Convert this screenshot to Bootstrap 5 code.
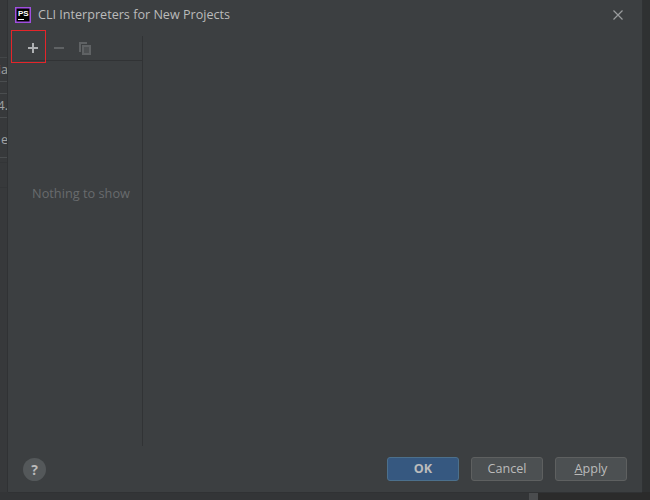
<!DOCTYPE html>
<html lang="en">
<head>
    <meta charset="UTF-8">
    <title>CLI Interpreters for New Projects</title>
    <link href="https://cdn.jsdelivr.net/npm/bootstrap@5.3.0/dist/css/bootstrap.min.css" rel="stylesheet">
    <style>
        html, body { height: 500px; overflow: hidden; }
        body { background: #2b2b2b; font-family: "Open Sans", "Liberation Sans", sans-serif; font-size: 12.6px; color: #bbb; }
        .top-area { height: 492px; }
        .behind { width: 8px; flex: none; color: #a0a2a4; overflow: hidden; background: #37393b; font-size: 12.6px; }
        .behind-row { border-bottom: 1px solid #4a4d4f; white-space: nowrap; justify-content: flex-end; }
        .row-h58 { height: 58px; border-bottom-color: #434648; }
        .row-ia { height: 24px; line-height: 23px; }
        .row-h12 { height: 12px; }
        .row-four { height: 24px; line-height: 23px; }
        .row-e { height: 40px; line-height: 44px; }
        .row-h5 { height: 5px; border-bottom-color: #333537; }
        .row-h25 { height: 25px; border-bottom-color: #333537; }
        .ide-dialog { width: 634px; flex: none; background: #3c3f41; box-shadow: -1px 0 0 #303234, 0 1px 0 #303234, 1px 0 0 #303234; position: relative; }
        .right-strip { width: 8px; flex: none; background: #2f3132; }
        .title-row { height: 36px; padding: 0 19px 6px 7px; flex: none; }
        .title-text { color: #bbb; margin-left: 7px; }
        .body-row { height: 410px; flex: none; }
        .side-pane { width: 123px; margin-left: 12px; flex: none; border-right: 1px solid #313335; position: relative; }
        .tool-row { height: 25px; flex: none; border-bottom: 1px solid #313335; padding-left: 8px; }
        .tool-minus { margin-left: 16px; }
        .tool-copy { margin-left: 15px; }
        .red-box { position: absolute; left: -9px; top: -6px; width: 35px; height: 33px; border: 1px solid #e5252a; }
        .empty-text { color: #686b6d; font-size: 12.75px; }
        .list-area { padding-bottom: 120px; }
        .foot-row { height: 46px; flex: none; padding: 0 15px; gap: 12px; }
        .help-btn { width: 23px; height: 23px; border-radius: 50%; background: #54585a; color: #bbb; font-weight: 700; font-size: 14px; }
        .ide-btn { width: 72px; height: 24px; padding: 0; font-size: 12.6px; line-height: 22px; color: #bbb; background: #4c5052; border: 1px solid #5e6060; border-radius: 3px; }
        .ide-btn-ok { background: #365880; border-color: #4c708c; font-weight: 700; }
        .bottom-area { height: 8px; }
        .bottom-left { width: 529px; flex: none; background: #333537; }
        .bottom-thumb { width: 9px; flex: none; background: #4a4c4e; }
    </style>
</head>
<body>
    <div class="top-area d-flex">
        <div class="behind">
            <div class="behind-row row-h58"></div>
            <div class="behind-row row-ia d-flex">ia</div>
            <div class="behind-row row-h12"></div>
            <div class="behind-row row-four d-flex">4.</div>
            <div class="behind-row row-e d-flex">e</div>
            <div class="behind-row row-h5"></div>
            <div class="behind-row row-h25"></div>
        </div>
        <div class="ide-dialog d-flex flex-column">
            <div class="title-row d-flex align-items-center">
                <svg width="16" height="16" viewBox="0 0 16 16">
                    <rect x="0.75" y="0.75" width="14.5" height="14.5" fill="#000" stroke="#a04fe0" stroke-width="1.5"/>
                    <text x="3" y="9" font-size="8" font-weight="700" fill="#fff" font-family="Liberation Sans">PS</text>
                    <rect x="3" y="12" width="6" height="1" fill="#fff"/>
                </svg>
                <span class="title-text">CLI Interpreters for New Projects</span>
                <svg class="ms-auto" width="10" height="10" viewBox="0 0 10 10">
                    <path d="M0.5 0.5L9.5 9.5M9.5 0.5L0.5 9.5" stroke="#9a9c9e" stroke-width="1.2"/>
                </svg>
            </div>
            <div class="body-row d-flex">
                <div class="side-pane d-flex flex-column">
                    <div class="tool-row d-flex align-items-center">
                        <svg width="10" height="10" viewBox="0 0 10 10"><path d="M5 0V10M0 5H10" stroke="#afb1b3" stroke-width="2"/></svg>
                        <svg class="tool-minus" width="10" height="10" viewBox="0 0 10 10"><path d="M0 5H10" stroke="#5f6264" stroke-width="2"/></svg>
                        <svg class="tool-copy" width="13" height="13" viewBox="0 0 13 13"><path d="M0 0H8V2H2V10H0Z" fill="#5f6264"/><path d="M3 3H12V13H3Z" fill="#5f6264"/><path d="M5 6H10M5 8H10M5 10H10" stroke="#3c3f41"/></svg>
                    </div>
                    <div class="red-box"></div>
                    <div class="list-area flex-grow-1 d-flex align-items-center justify-content-center">
                        <span class="empty-text">Nothing to show</span>
                    </div>
                </div>
            </div>
            <div class="foot-row d-flex align-items-center">
                <div class="help-btn d-flex align-items-center justify-content-center me-auto">?</div>
                <button type="button" class="btn ide-btn ide-btn-ok">OK</button>
                <button type="button" class="btn ide-btn">Cancel</button>
                <button type="button" class="btn ide-btn"><u>A</u>pply</button>
            </div>
        </div>
        <div class="right-strip"></div>
    </div>
    <div class="bottom-area d-flex">
        <div class="bottom-left"></div>
        <div class="bottom-thumb"></div>
    </div>
</body>
</html>
